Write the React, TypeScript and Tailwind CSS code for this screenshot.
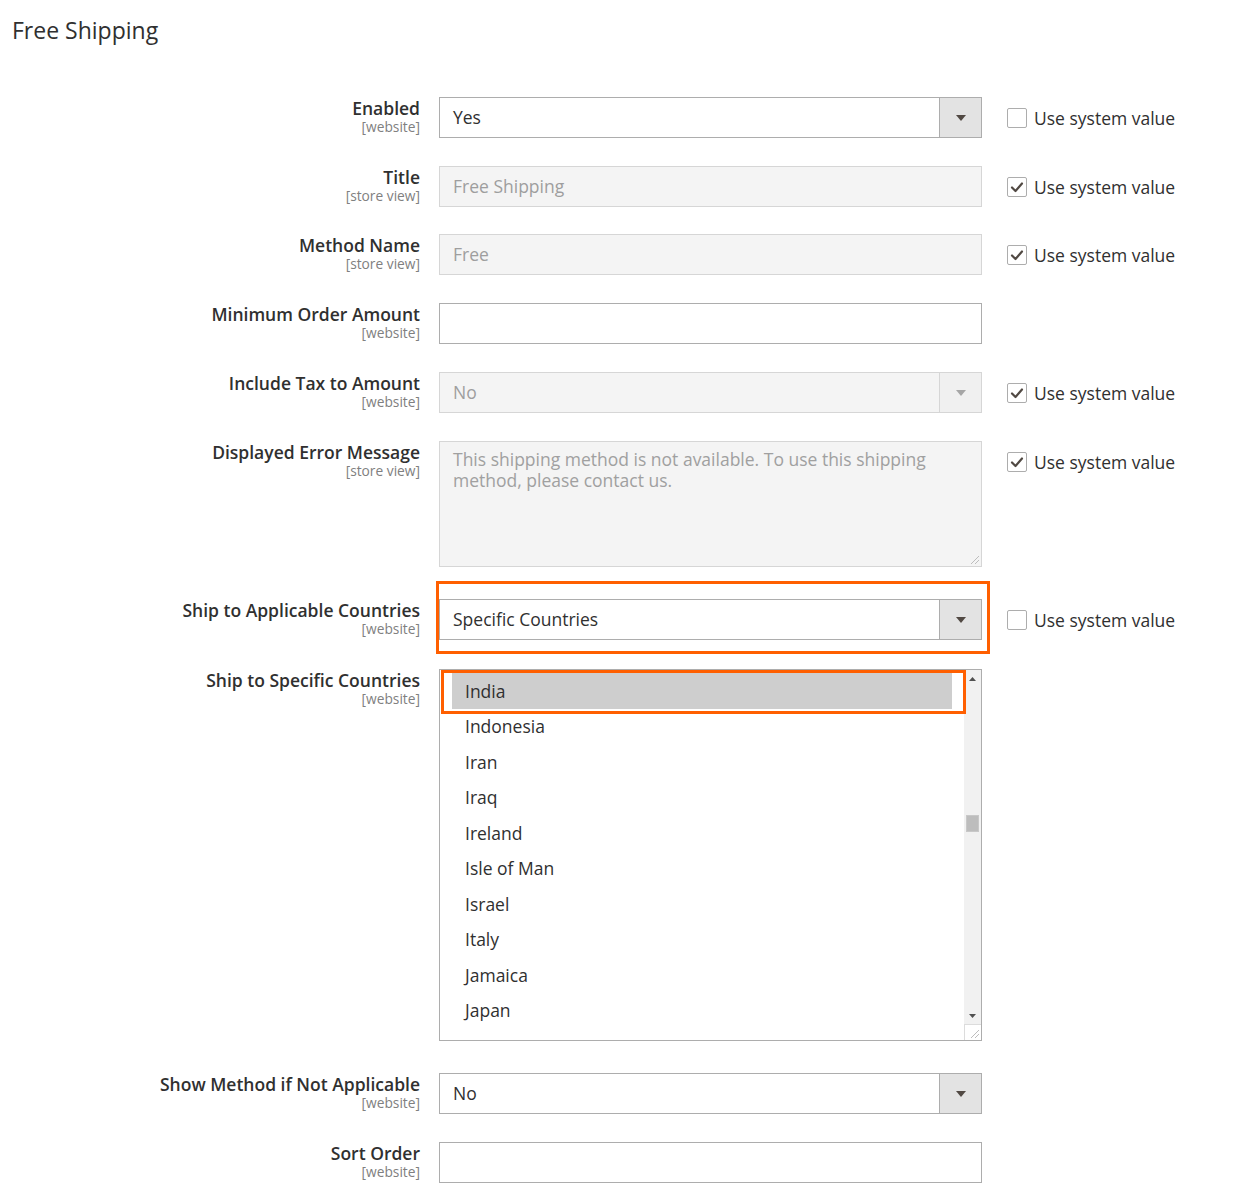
import React from "react";

const TEXT = "text-[17.5px] leading-[20px] text-[#303030]";

function Label({ title, scope }: { title: string; scope: string }) {
  return (
    <div className="w-[420px] shrink-0 text-right pt-[1px]">
      <div className="text-[17.5px] leading-[21px] font-semibold text-[#303030] whitespace-nowrap">{title}</div>
      <div className="text-[13.75px] leading-[16px] text-[#808080] whitespace-nowrap">{scope}</div>
    </div>
  );
}

function Checkbox({ checked }: { checked?: boolean }) {
  return (
    <div className="ml-[25px] h-[41px] flex items-center shrink-0">
      <div className="w-[20px] h-[20px] border border-[#adadad] rounded-[2px] bg-white flex items-center justify-center">
        {checked && (
          <svg width="14" height="12" viewBox="0 0 14 12">
            <polyline points="2,6.5 5.5,10 12,2.5" fill="none" stroke="#514943" strokeWidth="2.2" strokeLinecap="round" strokeLinejoin="round" />
          </svg>
        )}
      </div>
      <span className={`ml-[7px] ${TEXT} whitespace-nowrap`}>Use system value</span>
    </div>
  );
}

function Arrow({ disabled }: { disabled?: boolean }) {
  return (
    <svg width="10" height="6" viewBox="0 0 10 6">
      <polygon points="0,0 10,0 5,6" fill={disabled ? "#a6a6a6" : "#514943"} />
    </svg>
  );
}

function Select({ value, disabled }: { value: string; disabled?: boolean }) {
  return (
    <div
      className={`h-[41px] w-[543px] flex items-stretch border ${
        disabled ? "border-[#d6d6d6] bg-[#f4f4f4]" : "border-[#adadad] bg-white"
      }`}
    >
      <div className={`flex-1 flex items-center pl-[13px] text-[17.5px] ${disabled ? "text-[#9e9e9e]" : "text-[#303030]"}`}>
        {value}
      </div>
      <div
        className={`w-[42px] flex items-center justify-center border-l ${
          disabled ? "border-[#d6d6d6] bg-[#f0f0f0]" : "border-[#adadad] bg-[#e3e3e3]"
        }`}
      >
        <Arrow disabled={disabled} />
      </div>
    </div>
  );
}

function Input({ value, disabled }: { value?: string; disabled?: boolean }) {
  return (
    <div
      className={`h-[41px] w-[543px] flex items-center pl-[13px] border text-[17.5px] ${
        disabled ? "border-[#d6d6d6] bg-[#f4f4f4] text-[#9e9e9e]" : "border-[#adadad] bg-white text-[#303030]"
      }`}
    >
      {value}
    </div>
  );
}

function Grip() {
  return (
    <svg width="12" height="12" viewBox="0 0 12 12" className="absolute right-[1px] bottom-[1px]">
      <line x1="11" y1="3" x2="3" y2="11" stroke="#bdbdbd" strokeWidth="1" />
      <line x1="11" y1="7" x2="7" y2="11" stroke="#bdbdbd" strokeWidth="1" />
    </svg>
  );
}

const countries = [
  "India",
  "Indonesia",
  "Iran",
  "Iraq",
  "Ireland",
  "Isle of Man",
  "Israel",
  "Italy",
  "Jamaica",
  "Japan",
  "Jersey",
];

function MultiSelect() {
  return (
    <div className="relative w-[543px] h-[372px] border border-[#adadad] bg-white flex">
      <div className="flex-1 overflow-hidden px-[12px] pt-[3px]">
        {countries.map((c, i) => (
          <div
            key={c}
            className={`h-[35.5px] flex items-center pl-[13px] text-[17.5px] text-[#303030] whitespace-nowrap ${
              i === 0 ? "bg-[#cecece]" : ""
            }`}
          >
            {c}
          </div>
        ))}
      </div>
      <div className="w-[17px] bg-[#f1f1f1] flex flex-col">
        <div className="h-[17px] flex items-center justify-center">
          <svg width="7" height="4" viewBox="0 0 7 4">
            <polygon points="0,4 7,4 3.5,0" fill="#505050" />
          </svg>
        </div>
        <div className="flex-1">
          <div className="mt-[128px] mx-[2px] h-[17px] bg-[#bdbdbd] border border-[#c8c8c8]" />
        </div>
        <div className="h-[17px] flex items-center justify-center">
          <svg width="7" height="4" viewBox="0 0 7 4">
            <polygon points="0,0 7,0 3.5,4" fill="#505050" />
          </svg>
        </div>
        <div className="relative h-[16px] bg-white border-l border-t border-[#dcdcdc]">
          <Grip />
        </div>
      </div>
      <div className="absolute left-[1px] top-0 w-[525px] h-[44px] border-[3px] border-[#ff5f00]" />
    </div>
  );
}

function Row({
  label,
  scope,
  children,
  check,
  className = "",
}: {
  label: string;
  scope: string;
  children: React.ReactNode;
  check?: "on" | "off";
  className?: string;
}) {
  return (
    <div className={`flex items-start ${className}`}>
      <Label title={label} scope={scope} />
      <div className="ml-[19px] shrink-0">{children}</div>
      {check && <Checkbox checked={check === "on"} />}
    </div>
  );
}

export default function App() {
  return (
    <div className="w-[1259px] min-h-[1201px] bg-white font-['Open_Sans',sans-serif] overflow-hidden">
      <div className="pl-[12px] pt-[14px] text-[23px] leading-[32px] text-[#303030]">Free Shipping</div>
      <div className="flex flex-col">
        <Row label="Enabled" scope="[website]" check="off" className="mt-[51px]">
          <Select value="Yes" />
        </Row>
        <Row label="Title" scope="[store view]" check="on" className="mt-[28px]">
          <Input value="Free Shipping" disabled />
        </Row>
        <Row label="Method Name" scope="[store view]" check="on" className="mt-[27px]">
          <Input value="Free" disabled />
        </Row>
        <Row label="Minimum Order Amount" scope="[website]" className="mt-[28px]">
          <Input />
        </Row>
        <Row label="Include Tax to Amount" scope="[website]" check="on" className="mt-[28px]">
          <Select value="No" disabled />
        </Row>
        <Row label="Displayed Error Message" scope="[store view]" check="on" className="mt-[28px]">
          <div className="relative w-[543px] h-[126px] border border-[#d6d6d6] bg-[#f4f4f4] pl-[13px] pt-[7px] text-[17.5px] leading-[21px] text-[#a0a0a0] whitespace-nowrap">
            This shipping method is not available. To use this shipping
            <br />
            method, please contact us.
            <Grip />
          </div>
        </Row>
        <Row label="Ship to Applicable Countries" scope="[website]" check="off" className="mt-[32px]">
          <div className="relative">
            <Select value="Specific Countries" />
            <div className="absolute left-[-3px] top-[-18px] w-[554px] h-[73px] border-[3px] border-[#ff5f00]" />
          </div>
        </Row>
        <Row label="Ship to Specific Countries" scope="[website]" className="mt-[29px]">
          <MultiSelect />
        </Row>
        <Row label="Show Method if Not Applicable" scope="[website]" className="mt-[32px]">
          <Select value="No" />
        </Row>
        <Row label="Sort Order" scope="[website]" className="mt-[28px]">
          <Input />
        </Row>
      </div>
    </div>
  );
}
